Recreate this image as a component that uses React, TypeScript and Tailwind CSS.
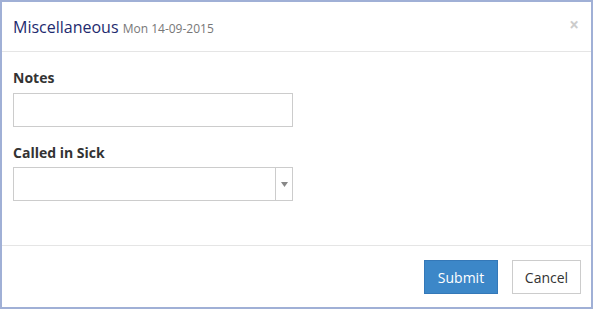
export default function App() {
  return (
    <div className="w-[593px] h-[309px] bg-white border-2 border-[#a0b0d6] flex flex-col font-['Open_Sans',sans-serif]">
      {/* Header */}
      <div className="h-[50px] shrink-0 flex items-center justify-between pl-[11px] pr-[12px] border-b border-[#e5e5e5]">
        <h4 className="text-[16px] text-[#1d2a6e] leading-none">
          Miscellaneous <span className="text-[12px] text-[#777]">Mon 14-09-2015</span>
        </h4>
        <span className="text-[#ccc] text-[17px] font-bold leading-none -mt-[4px]">×</span>
      </div>

      {/* Body */}
      <div className="flex-1 pl-[11px] pt-[17px] flex flex-col">
        <label className="text-[14px] font-bold text-[#333] leading-[18px]">Notes</label>
        <input className="mt-[6px] w-[280px] h-[34px] border border-[#ccc] outline-none" />
        <label className="mt-[17px] text-[14px] font-bold text-[#333] leading-[18px]">Called in Sick</label>
        <div className="mt-[5px] w-[280px] h-[34px] border border-[#ccc] flex">
          <div className="flex-1" />
          <div className="w-[17px] border-l border-[#ccc] flex items-center justify-center">
            <svg width="7" height="5" viewBox="0 0 7 5">
              <path d="M0 0 L7 0 L3.5 5 Z" fill="#888" />
            </svg>
          </div>
        </div>
      </div>

      {/* Footer */}
      <div className="h-[62px] shrink-0 border-t border-[#e5e5e5] flex items-center justify-end gap-[14px] pr-[10px] pt-[1px]">
        <button className="w-[74px] h-[34px] bg-[#3c87c8] border border-[#3478b8] text-white text-[14px]">Submit</button>
        <button className="w-[69px] h-[34px] bg-white border border-[#ccc] text-[#333] text-[14px]">Cancel</button>
      </div>
    </div>
  );
}
